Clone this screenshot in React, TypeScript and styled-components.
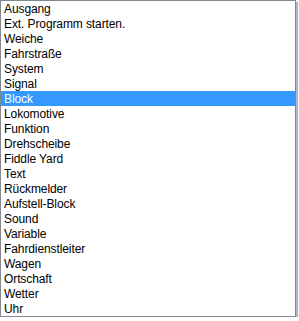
import { createGlobalStyle, styled } from "styled-components";

const GlobalStyle = createGlobalStyle`
  html, body {
    margin: 0;
    padding: 0;
    background: #ffffff;
  }
`;

const ListBox = styled.ul`
  width: 296px;
  height: 317px;
  box-sizing: border-box;
  margin: 0;
  padding: 0;
  list-style: none;
  background: #ffffff;
  border: 1px solid #828790;
  box-shadow: 2px 2px 1px rgba(120, 120, 140, 0.55);
  font-family: "Liberation Sans", Arial, sans-serif;
  font-size: 12px;
  color: #000000;
  overflow: hidden;
`;

const Item = styled.li<{ selected?: boolean }>`
  height: 14px;
  padding-top: 1px;
  line-height: 15px;
  padding-left: 3px;
  white-space: nowrap;
  letter-spacing: -0.1px;
  background: ${(p) => (p.selected ? "#3399ff" : "transparent")};
  color: ${(p) => (p.selected ? "#ffffff" : "#000000")};
`;

const items = [
  "Ausgang",
  "Ext. Programm starten.",
  "Weiche",
  "Fahrstraße",
  "System",
  "Signal",
  "Block",
  "Lokomotive",
  "Funktion",
  "Drehscheibe",
  "Fiddle Yard",
  "Text",
  "Rückmelder",
  "Aufstell-Block",
  "Sound",
  "Variable",
  "Fahrdienstleiter",
  "Wagen",
  "Ortschaft",
  "Wetter",
  "Uhr",
];

export default function App(): JSX.Element {
  return (
    <>
      <GlobalStyle />
      <ListBox>
        {items.map((el) => (
          <Item key={el} selected={el === "Block"}>
            {el}
          </Item>
        ))}
      </ListBox>
    </>
  );
}
